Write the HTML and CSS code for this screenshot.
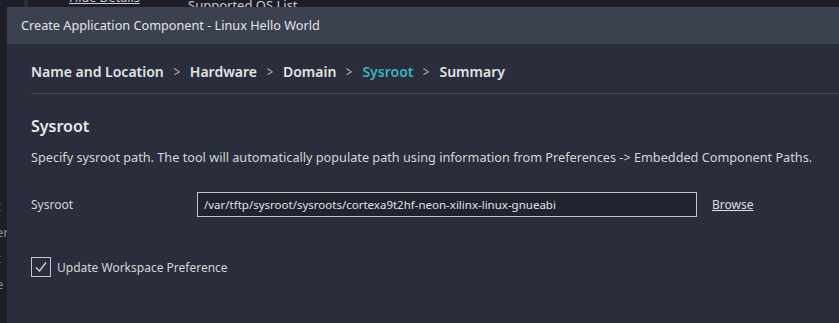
FILE: index.html
```html
<!DOCTYPE html>
<html lang="en">
<head>
    <meta charset="UTF-8">
    <title>Create Application Component</title>
    <link rel="stylesheet" href="styles.css">
</head>
<body>
    <div class="backdrop">
        <div class="bg-top">
            <span class="bg-link">Hide Details</span>
            <span class="bg-text">Supported OS List</span>
        </div>
        <div class="bg-left">
            <span>t</span>
            <span>er</span>
            <span>t</span>
            <span>e</span>
        </div>
    </div>

    <div class="dialog">
        <div class="dialog-title">Create Application Component - Linux Hello World</div>
        <div class="dialog-body">
            <div class="crumbs">
                <span class="crumb">Name and Location</span>
                <span class="sep">&gt;</span>
                <span class="crumb">Hardware</span>
                <span class="sep">&gt;</span>
                <span class="crumb">Domain</span>
                <span class="sep">&gt;</span>
                <span class="crumb active">Sysroot</span>
                <span class="sep">&gt;</span>
                <span class="crumb">Summary</span>
            </div>

            <h2 class="section-title">Sysroot</h2>
            <p class="desc">Specify sysroot path. The tool will automatically populate path using information from Preferences -&gt; Embedded Component Paths.</p>

            <div class="field-row">
                <label class="field-label">Sysroot</label>
                <div class="field-input">/var/tftp/sysroot/sysroots/cortexa9t2hf-neon-xilinx-linux-gnueabi</div>
                <a href="#" class="browse">Browse</a>
            </div>

            <div class="check-row">
                <span class="checkbox">
                    <svg width="14" height="14" viewBox="0 0 14 14">
                        <path d="M2 7.5 L5.5 11 L12 2.5" fill="none" stroke="#d8d8d8" stroke-width="1.3"/>
                    </svg>
                </span>
                <span class="check-label">Update Workspace Preference</span>
            </div>
        </div>
    </div>
</body>
</html>
```

FILE: styles.css
```css
* {
    margin: 0;
    padding: 0;
    box-sizing: border-box;
}

html, body {
    width: 839px;
    height: 323px;
    overflow: hidden;
}

body {
    background: #1d1e27;
    font-family: "Noto Sans", "Open Sans", sans-serif;
    color: #d6d8dc;
    position: relative;
}

/* page behind the dialog */
.backdrop {
    position: absolute;
    left: 0;
    top: 0;
    width: 839px;
    height: 323px;
}

.bg-top {
    position: absolute;
    left: 0;
    top: -12px;
    width: 839px;
    height: 19px;
    font-size: 12.5px;
    color: #c9ccd2;
    border-left: 24px solid #1d1e27;
}

.bg-top::before {
    content: "";
    position: absolute;
    left: 0;
    top: 0;
    width: 4px;
    height: 19px;
    background: #2b2d37;
}

.bg-link {
    position: absolute;
    left: 45px;
    top: 1px;
    text-decoration: underline;
}

.bg-text {
    position: absolute;
    left: 164px;
    top: 8px;
    font-size: 13px;
}

.bg-left {
    position: absolute;
    left: -4px;
    top: 193px;
    display: flex;
    flex-direction: column;
    font-size: 13px;
    color: #8d9098;
    line-height: 26px;
}

/* dialog */
.dialog {
    position: absolute;
    left: 7px;
    top: 7px;
    width: 840px;
    height: 320px;
    background: #2a2e3c;
}

.dialog-title {
    height: 37px;
    background: #3c4150;
    padding-left: 14px;
    font-size: 12.7px;
    line-height: 37px;
    color: #e2e4e8;
}

.dialog-body {
    padding: 0 0 0 24px;
}

.crumbs {
    display: flex;
    align-items: center;
    height: 50px;
    padding-top: 6px;
    border-bottom: 1px solid #454a58;
    font-size: 14px;
    font-weight: 600;
    color: #e1e3e6;
}

.sep {
    font-weight: 400;
    color: #b5b8bf;
    margin: 0 9px;
    font-size: 14px;
    transform: scaleX(0.8);
}

.crumb.active {
    color: #3fb1ba;
}

.section-title {
    margin-top: 21px;
    font-size: 16px;
    font-weight: 600;
    color: #e6e8eb;
    line-height: 22px;
}

.desc {
    margin-top: 11px;
    font-size: 12.7px;
    line-height: 18px;
    color: #d3d5da;
}

.field-row {
    display: flex;
    align-items: center;
    margin-top: 26px;
}

.field-label {
    width: 166px;
    font-size: 12px;
    color: #d3d5da;
}

.field-input {
    width: 500px;
    height: 25px;
    border: 1px solid #c4c6cc;
    background: #202330;
    font-size: 11.5px;
    line-height: 23px;
    padding-left: 6px;
    color: #e0e2e6;
}

.browse {
    margin-left: 15px;
    font-size: 12px;
    color: #dcdee2;
    text-decoration: underline;
}

.check-row {
    display: flex;
    align-items: center;
    margin-top: 40px;
}

.checkbox {
    width: 20px;
    height: 20px;
    border: 1px solid #c4c6cc;
    display: flex;
    align-items: center;
    justify-content: center;
}

.check-label {
    margin-left: 6px;
    font-size: 12px;
    color: #d3d5da;
}
```
